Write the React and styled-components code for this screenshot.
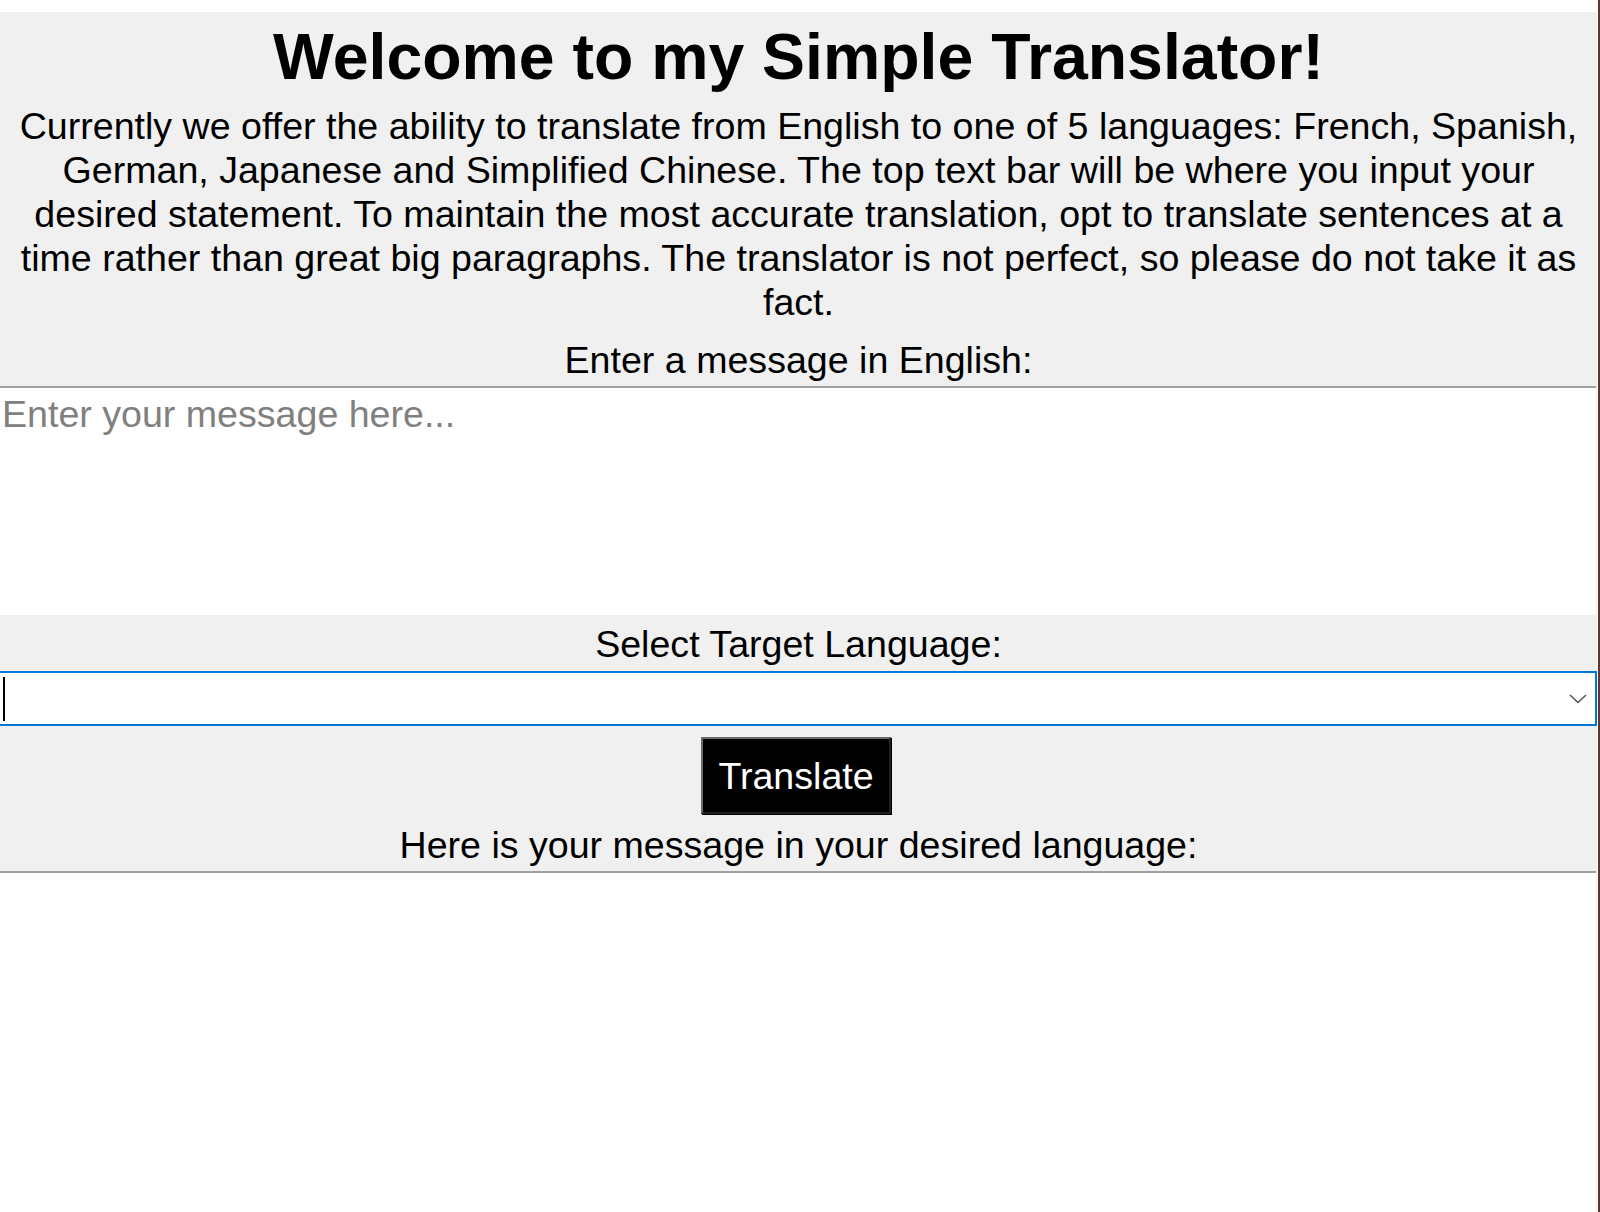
import React from "react";
import styled, { createGlobalStyle } from "styled-components";

const GlobalStyle = createGlobalStyle`
  html, body {
    margin: 0;
    padding: 0;
    background: #ffffff;
  }
  body {
    font-family: "Liberation Sans", Arial, sans-serif;
    color: #000000;
  }
  * {
    box-sizing: border-box;
  }
`;

const Page = styled.div`
  display: flex;
  width: 1600px;
  height: 1212px;
  padding-top: 12px;
  background: #ffffff;
  overflow: hidden;
`;

const Frame = styled.div`
  flex: 0 0 1597px;
  display: flex;
  flex-direction: column;
  background: #f0f0f0;
`;

const Edge = styled.div`
  flex: 0 0 2px;
  margin-left: 1px;
  margin-top: -12px;
  background: #5b3632;
`;

const Title = styled.h1`
  margin: 8px 0 0;
  font-size: 64.4px;
  line-height: 74px;
  font-weight: 700;
  text-align: center;
`;

const Intro = styled.p`
  margin: 10px 0 0;
  font-size: 37.6px;
  line-height: 44px;
  text-align: center;
`;

const Label = styled.div`
  margin-top: ${(p) => p.$top || 0}px;
  padding-bottom: ${(p) => p.$bottom || 0}px;
  font-size: 37.6px;
  line-height: 44px;
  text-align: center;
`;

const TextBox = styled.textarea`
  display: block;
  width: 1596px;
  height: ${(p) => p.$height}px;
  margin: 0;
  padding: 4px 2px 0;
  border: none;
  border-top: 2px solid #a0a0a0;
  border-radius: 0;
  background: #ffffff;
  font-family: "Liberation Sans", Arial, sans-serif;
  font-size: 37.6px;
  line-height: 44px;
  color: #000000;
  resize: none;
  outline: none;
  flex: ${(p) => (p.$fill ? "1 1 auto" : "0 0 auto")};

  &::placeholder {
    color: #808080;
    opacity: 1;
  }
`;

const SelectBox = styled.div`
  display: flex;
  align-items: center;
  width: 1597px;
  height: 55px;
  margin-top: 5px;
  padding: 0 6px 0 3px;
  background: #ffffff;
  border: 2px solid #0078d7;
  border-left: none;
`;

const Caret = styled.span`
  width: 2px;
  height: 44px;
  background: #000000;
`;

const Spacer = styled.span`
  flex: 1;
`;

const Chevron = styled.svg`
  width: 18px;
  height: 10px;
  margin-right: 2px;
`;

const ButtonRow = styled.div`
  display: flex;
  justify-content: center;
  margin-top: 11px;
  padding-right: 5px;
`;

const TranslateButton = styled.button`
  width: 190px;
  height: 77px;
  padding: 0;
  background: #000000;
  color: #ffffff;
  border: 2px solid;
  border-color: #6a6a6a #202020 #202020 #6a6a6a;
  box-shadow: 1px 1px 0 #000000;
  font-family: "Liberation Sans", Arial, sans-serif;
  font-size: 37.6px;
  line-height: 44px;
  cursor: pointer;
`;

export default function App() {
  return (
    <>
      <GlobalStyle />
      <Page>
        <Frame>
          <Title>Welcome to my Simple Translator!</Title>
          <Intro>
            Currently we offer the ability to translate from English to one of 5 languages: French, Spanish,
            <br />
            German, Japanese and Simplified Chinese. The top text bar will be where you input your
            <br />
            desired statement. To maintain the most accurate translation, opt to translate sentences at a
            <br />
            time rather than great big paragraphs. The translator is not perfect, so please do not take it as
            <br />
            fact.
          </Intro>
          <Label $top={14} $bottom={4}>Enter a message in English:</Label>
          <TextBox $height={229} placeholder="Enter your message here..." />
          <Label $top={7}>Select Target Language:</Label>
          <SelectBox>
            <Caret />
            <Spacer />
            <Chevron viewBox="0 0 18 10">
              <path d="M1 1 L9 8.5 L17 1" fill="none" stroke="#555555" strokeWidth="1.6" />
            </Chevron>
          </SelectBox>
          <ButtonRow>
            <TranslateButton>Translate</TranslateButton>
          </ButtonRow>
          <Label $top={9} $bottom={4}>Here is your message in your desired language:</Label>
          <TextBox $fill $height={339} />
        </Frame>
        <Edge />
      </Page>
    </>
  );
}
